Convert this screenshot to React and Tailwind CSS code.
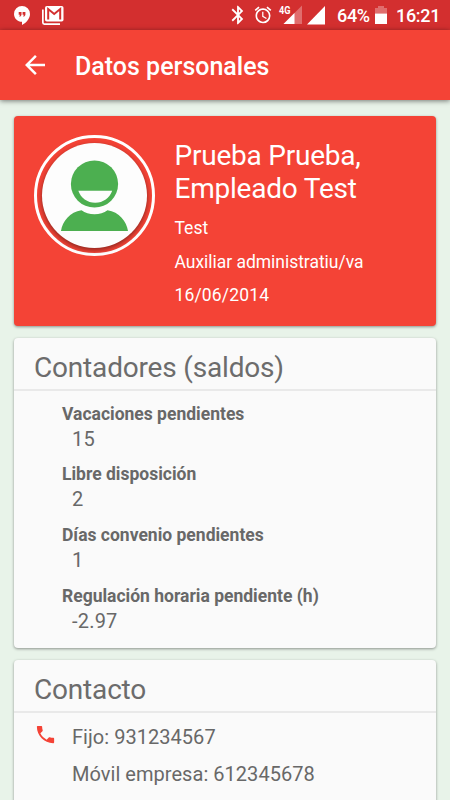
import React from "react";
import { MdArrowBack, MdPhone, MdBluetooth, MdAlarm } from "react-icons/md";

const counters = [
  { label: "Vacaciones pendientes", value: "15" },
  { label: "Libre disposición", value: "2" },
  { label: "Días convenio pendientes", value: "1" },
  { label: "Regulación horaria pendiente (h)", value: "-2.97" },
];

const StatusBar = () => (
  <div className="flex h-[30px] shrink-0 items-center bg-[#d32f2f] text-[18px] font-medium text-white">
    <svg className="ml-[14px]" width="16" height="19" viewBox="0 0 16 19">
      <path fill="#fff" d="M8 0a8 8 0 0 0-8 8c0 4.400 3.600 7.800 8 7.800V19c4.500-2.300 8-6.500 8-11a8 8 0 0 0-8-8z" />
      <path fill="#d32f2f" d="M4.700 6h2.800v2.900L6.400 10.500H5.200L6 8.800H4.700zM8.600 6h2.800v2.900l-1.100 1.600H9.100l.8-1.700H8.600z" />
    </svg>
    <svg className="ml-[12px]" width="22" height="19" viewBox="0 0 22 19">
      <path fill="none" stroke="#fff" strokeWidth="1.700" d="M.85 3.500v13.100q0 1.500 1.500 1.500H18" />
      <rect x="3" y="0" width="18.500" height="15.500" rx="1.800" fill="#fff" />
      <path fill="none" stroke="#d32f2f" strokeWidth="2" d="M6.200 13.500V3l6 4.900 6-4.900v10.500" />
    </svg>
    <div className="ml-auto flex items-center">
      <MdBluetooth className="-mr-[3px]" size={22} />
      <MdAlarm className="ml-[7px]" size={20} />
      <svg className="ml-[6px] overflow-visible" width="24" height="24" viewBox="0 -2.500 24 24">
        <path fill="#fff" fillOpacity=".3" d="M23 0v18.500H4.500z" />
        <path fill="#fff" d="M15.500 7.500v11h-11z" />
        <rect x="0" y="0" width="11.800" height="9.500" fill="#d32f2f" />
        <text x="0" y="8.500" fill="#fff" fontFamily="Roboto" fontWeight="700" fontSize="11.500" textLength="11.500" lengthAdjust="spacingAndGlyphs">4G</text>
      </svg>
      <svg className="ml-[4px]" width="18" height="19" viewBox="0 0 18 19">
        <path fill="#fff" d="M18 0v18.500H0z" />
      </svg>
      <span className="ml-[12px] w-[33px] whitespace-nowrap tracking-[-0.3px]">64%</span>
      <svg className="ml-[5px]" width="12" height="18" viewBox="0 0 12 18">
        <path fill="#fff" fillOpacity=".3" d="M3 0h6v2h3v5.500H0V2h3z" />
        <path fill="#fff" d="M0 7.500h12V18H0z" />
      </svg>
      <span className="ml-[9px] mr-[10px] w-[44px] whitespace-nowrap tracking-[-0.3px]">16:21</span>
    </div>
  </div>
);

const Avatar = () => (
  <div className="flex h-[121px] w-[121px] shrink-0 items-center justify-center rounded-full border-[3px] border-white">
    <div className="h-[105px] w-[105px] rounded-full bg-[#fdfdfd] shadow-[0_2px_5px_rgba(0,0,0,0.45)]">
      <svg width="105" height="105" viewBox="42 143 105 105">
        <circle cx="94.500" cy="184" r="23.600" fill="#4caf50" />
        <path fill="#fdfdfd" d="M78.300 190.800h33.900c-2.600 7.200-9 12-17 12s-14.300-4.800-16.900-12z" />
        <path fill="#4caf50" d="M61 231c1.200-9.500 9-19.300 20.500-20.800 3.500 2.500 8 4 13 4s9.500-1.500 13-4c11.500 1.500 19.300 11.300 20.500 20.800z" />
      </svg>
    </div>
  </div>
);

const Card = ({ title, children }) => (
  <section className="rounded-[4px] bg-[#fafafa] text-[#686868] shadow-[0_1px_3px_rgba(0,0,0,0.4)]">
    <h2 className="h-[53px] border-b-2 border-[#e9e9e9] pl-[20px] pt-[10px] text-[28px] leading-[40px] tracking-[-0.18px] text-[#6c6c6c]">
      {title}
    </h2>
    {children}
  </section>
);

const App = () => {
  return (
    <div className="flex h-[800px] w-[450px] flex-col overflow-hidden bg-[#e8f3e9] font-[Roboto,sans-serif]">
      <StatusBar />
      <header className="z-10 flex h-[70px] shrink-0 items-center bg-[#f44336] pb-[1px] text-white shadow-[0_1px_5px_rgba(0,0,0,0.5)]">
        <MdArrowBack className="ml-[20px]" size={30} />
        <h1 className="ml-[25px] pt-[5px] text-[25px] font-medium leading-[30px]">Datos personales</h1>
      </header>

      <main className="flex flex-col gap-[12px] px-[14px] pt-[16px]">
        <section className="flex h-[210px] rounded-[4px] bg-[#f44336] pl-[20px] pt-[19px] text-white shadow-[0_1px_3px_rgba(0,0,0,0.4)]">
          <Avatar />
          <div className="ml-[19.500px] pt-[5px]">
            <h2 className="text-[28px] leading-[32.500px] tracking-[-0.22px]">
              Prueba Prueba,
              <br />
              Empleado Test
            </h2>
            <p className="mt-[6px] text-[17.500px] leading-[34px]">Test</p>
            <p className="text-[17.500px] leading-[34px] tracking-[-0.03px]">Auxiliar administratiu/va</p>
            <p className="text-[17.500px] leading-[33px] tracking-[0.15px]">16/06/2014</p>
          </div>
        </section>

        <Card title="Contadores (saldos)">
          <dl className="h-[257px] pl-[48px] pt-[9.500px]">
            {counters.map((counter) => (
              <div key={counter.label} className="h-[60.700px]">
                <dt className="text-[17.500px] font-bold leading-[26px]">{counter.label}</dt>
                <dd className="pl-[10px] text-[20px] leading-[25px] tracking-[0.2px]">{counter.value}</dd>
              </div>
            ))}
          </dl>
        </Card>

        <Card title="Contacto">
          <div className="flex h-[120px] pl-[20px] pt-[6px]">
            <MdPhone className="mt-[4px] text-[#f44336]" size={23} />
            <div className="ml-[15px] text-[20px] leading-[37px] tracking-[0.04px]">
              <p>Fijo: 931234567</p>
              <p>Móvil empresa: 612345678</p>
            </div>
          </div>
        </Card>
      </main>
    </div>
  );
};

export default App;
